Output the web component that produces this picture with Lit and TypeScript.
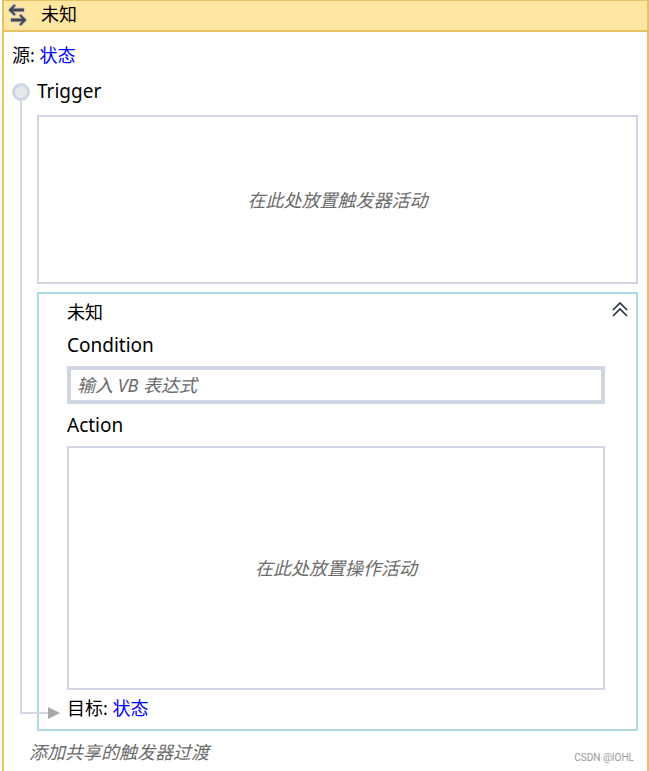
import { LitElement, html, css } from "lit";
import { customElement, state } from "lit/decorators.js";

@customElement("app-root")
export class AppRoot extends LitElement {
  @state() private expanded = true;

  static styles = css`
    :host {
      display: block;
      min-height: 100vh;
      background: #fff;
      color: #000;
      font-family: "Noto Sans", "Noto Sans CJK SC", sans-serif;
      font-size: 18px;
      line-height: 24px;
    }
    * {
      box-sizing: border-box;
    }
    .designer {
      min-height: 100vh;
      margin-left: 2px;
      border: 2px solid #e6c264;
      border-top-width: 1px;
      border-bottom: 0;
      display: flex;
      flex-direction: column;
    }
    .header {
      display: flex;
      align-items: center;
      gap: 12px;
      height: 31px;
      padding: 0 3px 4px;
      background: #ffe6a2;
      border-bottom: 2px solid #e6c264;
    }
    .title,
    .label {
      display: block;
      margin: 0;
      font-size: 18px;
      font-weight: 400;
      line-height: 24px;
    }
    .latin {
      font-size: 19px;
    }
    .header-icon {
      display: block;
      flex: none;
    }
    .body {
      display: flex;
      flex-direction: column;
      padding: 11px 9px 0 8px;
    }
    a {
      color: #00f;
      text-decoration: none;
    }
    .flow {
      position: relative;
      margin-top: 12px;
      padding-left: 25px;
    }
    .node {
      position: absolute;
      left: 0;
      top: 4px;
      width: 18px;
      height: 18px;
      border: 3px solid #cfd6e3;
      border-radius: 50%;
      background: #e4e9ec;
    }
    .connector {
      position: absolute;
      left: 8px;
      top: 22px;
      bottom: 17px;
      width: 28px;
      border: solid #d3d8e5;
      border-width: 0 0 2px 2px;
    }
    .arrow {
      position: absolute;
      left: 36px;
      bottom: 12px;
    }
    .drop {
      display: flex;
      align-items: center;
      justify-content: center;
      border: 2px solid #d0d5e3;
      color: #6b6b6b;
      font-style: italic;
    }
    .trigger-drop {
      height: 169px;
      margin-top: 12px;
    }
    .transition {
      position: relative;
      display: flex;
      flex-direction: column;
      gap: 6px;
      margin-top: 8px;
      padding: 6px 31px 9px 28px;
      border: 2px solid #add8e6;
    }
    .fields {
      display: flex;
      flex-direction: column;
      gap: 9px;
    }
    .toggle {
      position: absolute;
      right: 8px;
      top: 7px;
      width: 16px;
      height: 18px;
      padding: 0;
      border: 0;
      background: none;
      cursor: pointer;
    }
    .toggle svg {
      display: block;
    }
    .expression {
      width: 100%;
      height: 38px;
      padding: 0 6px;
      border: 4px solid #d0d5e3;
      border-radius: 0;
      outline: 0;
      background: #fff;
      color: #000;
      font: inherit;
    }
    .expression::placeholder {
      color: #6b6b6b;
      font-style: italic;
      opacity: 1;
    }
    .action-drop {
      height: 244px;
    }
    .footer {
      display: flex;
      justify-content: space-between;
      align-items: flex-end;
      padding: 9px 4px 7px 17px;
    }
    .add {
      padding: 0;
      border: 0;
      background: none;
      color: #6b6b6b;
      font: inherit;
      font-style: italic;
      cursor: pointer;
    }
    .credit {
      color: #999;
      font-family: Roboto, sans-serif;
      font-size: 10px;
      line-height: 12px;
    }
  `;

  private toggle() {
    this.expanded = !this.expanded;
  }

  render() {
    return html`
      <main class="designer">
        <header class="header">
          <svg class="header-icon" width="22" height="24" viewBox="0 0 22 24" aria-hidden="true">
            <g fill="none" stroke="#d6d2c4" stroke-width="5" stroke-linejoin="round" stroke-linecap="round">
              <path d="M16 8H3M7 4L3 8L7 12" />
              <path d="M5 18H18M14 14L18 18L14 22" />
            </g>
            <g fill="none" stroke="#44464a" stroke-width="3">
              <path d="M17 8H3" />
              <path d="M4 18H18" />
            </g>
            <g fill="none" stroke="#44464a" stroke-width="2">
              <path d="M8 3L3 8L8 13" />
              <path d="M13 13L18 18L13 23" />
            </g>
          </svg>
          <h1 class="title">未知</h1>
        </header>
        <div class="body">
          <div class="source">源: <a href="#source">状态</a></div>
          <div class="flow">
            <section class="trigger">
              <h2 class="label latin">Trigger</h2>
              <div class="drop trigger-drop">在此处放置触发器活动</div>
            </section>
            <section class="transition">
              <div class="fields">
                <h2 class="label">未知</h2>
                ${this.expanded
                  ? html`
                      <label class="label latin" for="condition">Condition</label>
                      <input id="condition" class="expression" type="text" placeholder="输入 VB 表达式" />
                      <div class="label latin">Action</div>
                      <div class="drop action-drop">在此处放置操作活动</div>
                    `
                  : ""}
              </div>
              <div class="target">目标: <a href="#target">状态</a></div>
              <button
                class="toggle"
                aria-label="折叠"
                aria-expanded=${this.expanded}
                @click=${this.toggle}
              >
                <svg width="16" height="18" viewBox="0 0 16 18">
                  <path
                    d="M1 9L8 2L15 9M1 15L8 8L15 15"
                    fill="none"
                    stroke="#2b3348"
                    stroke-width="1.6"
                  />
                </svg>
              </button>
            </section>
            <span class="connector"></span>
            <span class="node"></span>
            <svg class="arrow" width="12" height="12" viewBox="0 0 12 12" aria-hidden="true">
              <path d="M0 0L12 6L0 12Z" fill="#a9a9a9" />
            </svg>
          </div>
          <footer class="footer">
            <button class="add">添加共享的触发器过渡</button>
            <span class="credit">CSDN @IOHL</span>
          </footer>
        </div>
      </main>
    `;
  }
}
